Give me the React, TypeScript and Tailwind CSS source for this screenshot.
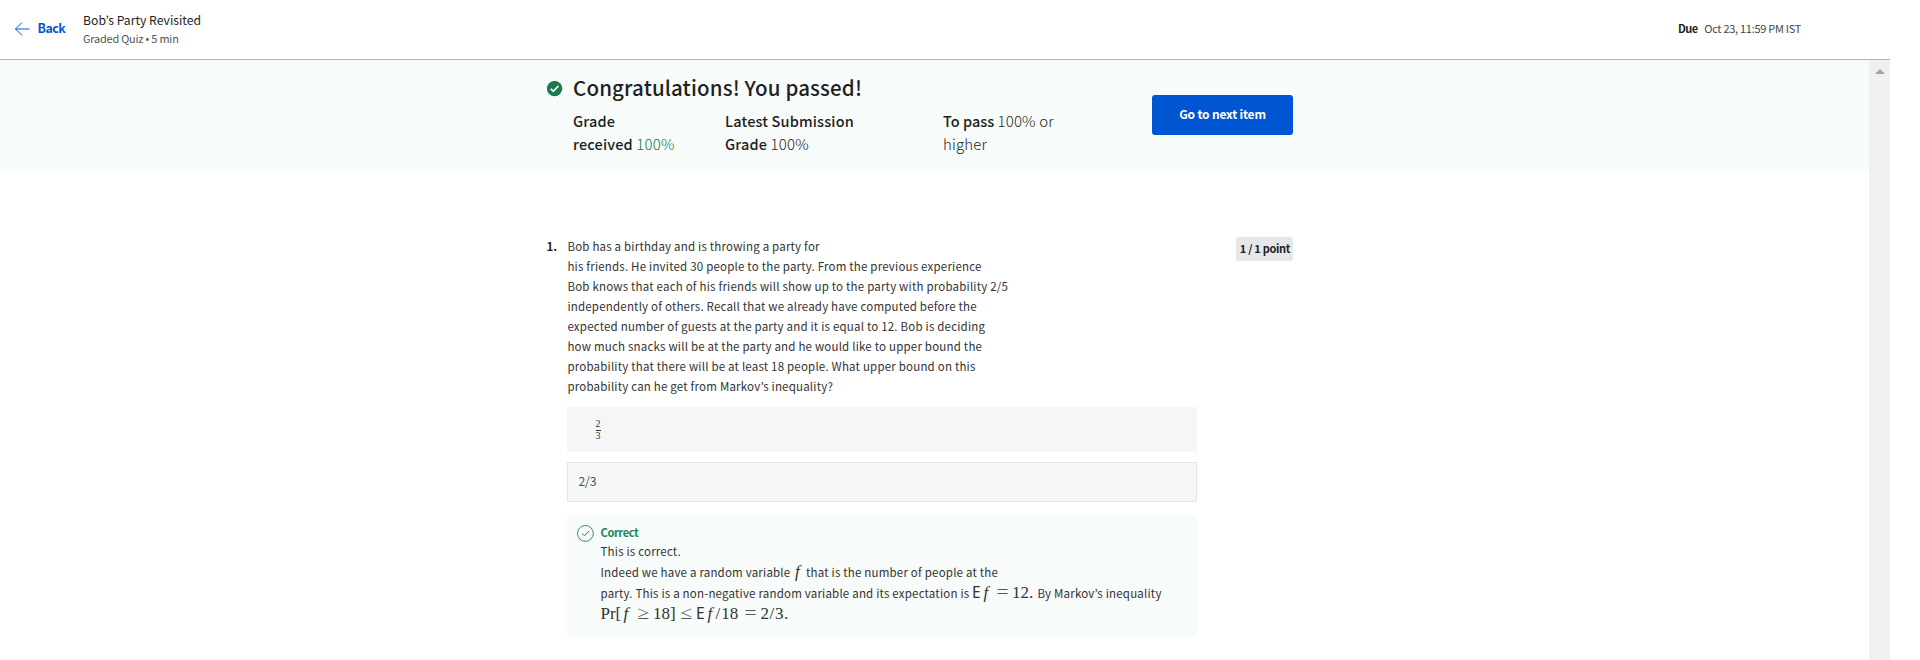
import type { ReactNode } from 'react'

function Formula({ children }: { children: ReactNode }) {
  return <div className="flex h-[21px] items-baseline leading-5 whitespace-pre">{children}</div>
}

function Num({ w, children }: { w: string; children: ReactNode }) {
  return <span className={`${w} shrink-0 font-['Liberation_Serif',serif] text-[17px] leading-[16px] tracking-normal`}>{children}</span>
}

function Rel({ w, children }: { w: string; children: ReactNode }) {
  return <span className={`${w} shrink-0 scale-x-115 text-center font-['Liberation_Serif',serif] text-[18.5px] leading-[15px] tracking-normal text-[#555]`}>{children}</span>
}

function Fn({ w }: { w: string }) {
  return <i className={`${w} shrink-0 pl-[1.5px] font-['Liberation_Serif',serif] text-[17px] leading-[16px] tracking-normal`}>f</i>
}

function Expect() {
  return <span className="w-[10px] shrink-0 font-['Noto_Sans',sans-serif] text-[15.5px] leading-[15px] tracking-normal">E</span>
}

function BackArrow() {
  return (
    <svg className="mt-[21px] h-4 w-4 shrink-0" viewBox="0 0 16 16" fill="none" stroke="#0056D2" strokeWidth="1">
      <path d="M8 1.5 1.5 8 8 14.5" />
      <path d="M1.5 8H15.5" />
    </svg>
  )
}

const question = [
  'Bob has a birthday and is throwing a party for',
  'his friends. He invited 30 people to the party. From the previous experience',
  'Bob knows that each of his friends will show up to the party with probability 2/5',
  'independently of others. Recall that we already have computed before the',
  'expected number of guests at the party and it is equal to 12. Bob is deciding',
  'how much snacks will be at the party and he would like to upper bound the',
  'probability that there will be at least 18 people. What upper bound on this',
  'probability can he get from Markov’s inequality?',
]

export default function App() {
  return (
    <div className="flex h-[660px] w-[1920px] flex-col overflow-hidden bg-white font-['Noto_Sans_CJK_KR',sans-serif] text-[#1f1f1f]">
      <header className="flex h-[60px] w-[1890px] shrink-0 items-start border-b border-[#b4b4b4] pl-[14px]">
        <BackArrow />
        <span className="ml-[7.5px] mt-[18px] w-[45.5px] text-[12.3px] leading-5 font-bold tracking-[-0.45px] text-[#0056D2]">Back</span>
        <div className="mt-[10px] grow">
          <div className="text-[12.2px] leading-5">Bob’s Party Revisited</div>
          <div className="text-[10.9px] leading-4 tracking-[-0.19px] text-[#555]">Graded Quiz • 5 min</div>
        </div>
        <div className="mt-[18px] flex w-[212px] gap-[6.5px] text-[11px] leading-5">
          <span className="font-bold tracking-[-0.5px]">Due</span>
          <span className="tracking-[-0.28px] text-[#444]">Oct 23, 11:59 PM IST</span>
        </div>
      </header>

      <div className="flex w-[1890px] grow">
        <main className="w-[1869px]">
          <section className="flex h-[110px] bg-[#f7fbfa] pl-[547px]">
            <svg className="mt-[21px] h-[16px] w-[16px]" viewBox="0 0 16 16">
              <circle cx="7.6" cy="7.6" r="7.7" fill="#1d7c4d" />
              <path d="M3.8 7.9 6.3 10.3 11.4 5" fill="none" stroke="#fff" strokeWidth="1.8" />
            </svg>
            <div className="ml-[10px] w-[579px] pt-3">
              <h1 className="text-[20.5px] leading-[30px] font-medium tracking-[0.15px]">Congratulations! You passed!</h1>
              <div className="mt-[7px] flex text-[14.5px] leading-[23px] font-medium tracking-[0.15px]">
                <p className="w-[152px]">Grade<br />received <span className="text-[15px] font-light tracking-[0.2px] text-[#0f7a45]">100%</span></p>
                <p className="w-[218px]">Latest Submission<br />Grade <span className="text-[15px] font-light tracking-[0.2px]">100%</span></p>
                <p><span className="tracking-[0.03px]">To pass </span><span className="text-[15px] font-light tracking-[0.15px]">100% or<br />higher</span></p>
              </div>
            </div>
            <button className="mt-[35px] h-10 w-[141px] rounded-[3px] bg-[#0056D2] pb-[2px] text-[12px] leading-5 font-bold tracking-[-0.2px] text-white">Go to next item</button>
          </section>

          <section className="flex pl-[546.5px] pt-[66px]">
            <span className="w-[20.5px] text-[11.5px] leading-5 font-bold">1.</span>
            <div className="w-[630px]">
              <div className="pl-[0.4px] text-[11.5px] leading-5 tracking-[0.2px] text-[#333]">
                {question.map((line) => <p key={line}>{line}</p>)}
              </div>
              <div className="mt-[11px] flex h-[45px] items-start bg-[#f5f6f8] pl-[28.5px] pt-[11px]">
                <span className="flex w-[5px] flex-col items-center font-['Liberation_Serif',serif] text-[10px] leading-[11px] text-[#333]">
                  <span className="h-3">2</span>
                  <span className="h-px w-[5px] bg-[#333]" />
                  <span className="leading-[10px]">3</span>
                </span>
              </div>
              <div className="mt-[10px] h-10 border border-[#e3e5e7] bg-[#f5f6f8] pl-[10.5px] pt-2 text-[12.3px] leading-5 tracking-[-0.2px] text-[#555]">2/3</div>
              <div className="mt-[13px] flex h-[121px] bg-[#f7fbfa] pl-[10px]">
                <svg className="mt-[10px] h-[17px] w-[17px] shrink-0" viewBox="0 0 17 17" fill="none" stroke="#1f8354">
                  <circle cx="8.4" cy="8.4" r="7.9" strokeWidth="0.9" />
                  <path d="M5 8.4 7.4 10.8 12 6" strokeWidth="1" />
                </svg>
                <div className="ml-[6.5px] pt-[7px] text-[11.5px] tracking-[0.2px] text-[#333]">
                  <div className="text-[11.2px] leading-5 font-bold tracking-[-0.45px] text-[#1f8354]">Correct</div>
                  <div className="-mt-px mb-px leading-5">This is correct.</div>
                  <Formula>
                    <span className="w-[193px]">Indeed we have a random variable</span>
                    <Fn w="w-[12.5px]" />
                    <span>that is the number of people at the</span>
                  </Formula>
                  <Formula>
                    <span className="w-[371.5px]">party. This is a non-negative random variable and its expectation is</span>
                    <Expect />
                    <Fn w="w-[11px]" />
                    <Rel w="w-[19px]">=</Rel>
                    <Num w="w-[25.5px]">12.</Num>
                    <span>By Markov’s inequality</span>
                  </Formula>
                  <div className="pt-[2px]">
                    <Formula>
                      <Num w="w-[21.5px]">Pr[</Num>
                      <Fn w="w-[11px]" />
                      <Rel w="w-[20px]">≥</Rel>
                      <Num w="w-[23px]">18]</Num>
                      <Rel w="w-[20px]">≤</Rel>
                      <Expect />
                      <Fn w="w-[9.5px]" />
                      <Num w="w-[24px]"><span className="tracking-[1px]">/</span>18</Num>
                      <Rel w="w-[21px]">=</Rel>
                      <Num w="w-[30px]"><span className="tracking-[0.6px]">2/3.</span></Num>
                    </Formula>
                  </div>
                </div>
              </div>
            </div>
            <span className="ml-[39px] mt-px h-6 w-[57px] rounded-[3px] bg-[#e5e7e8] pl-px text-center text-[11px] leading-[23px] font-bold tracking-[-0.3px]">1 / 1 point</span>
          </section>
        </main>
        <aside className="flex w-[21px] justify-center bg-[#f0f0f0] pt-[9px]">
          <svg className="h-[5px] w-[10px]" viewBox="0 0 10 5"><path d="M0 5 5 0l5 5z" fill="#a3a3a3" /></svg>
        </aside>
      </div>
    </div>
  )
}
